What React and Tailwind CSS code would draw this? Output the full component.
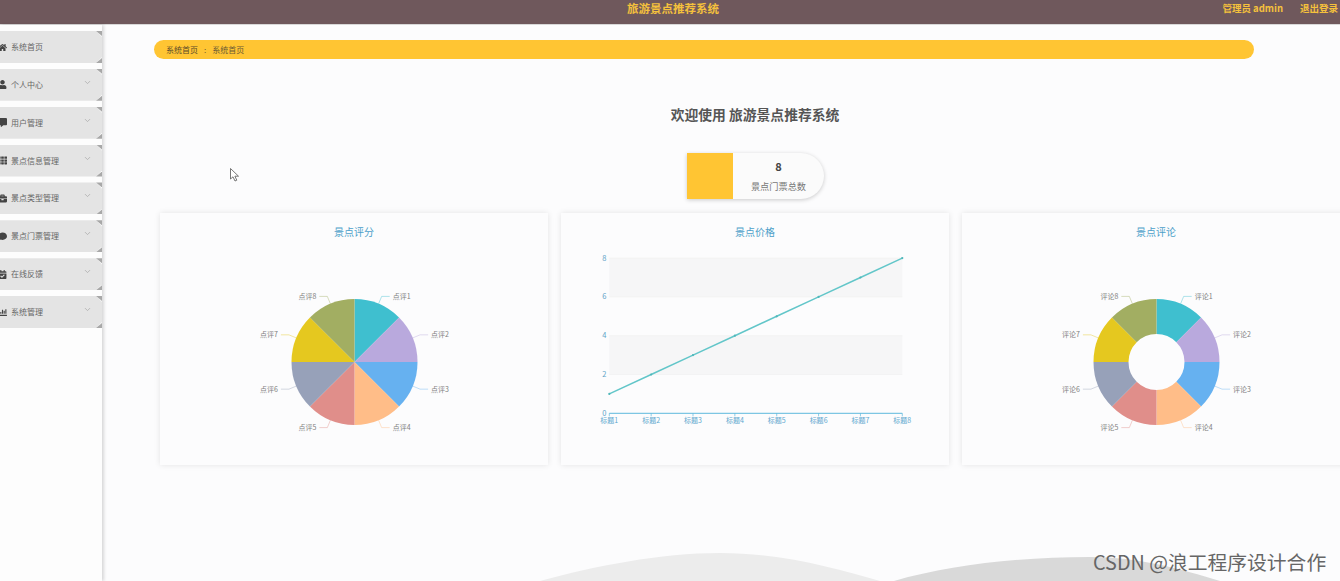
import { ChevronDown } from 'lucide-react'
import { FaHome, FaUser, FaComment, FaTh, FaBriefcase, FaCalendarCheck, FaChartBar, FaCommentAlt } from 'react-icons/fa'

const menu = [
  { name: '系统首页', icon: FaHome, plain: true },
  { name: '个人中心', icon: FaUser },
  { name: '用户管理', icon: FaCommentAlt },
  { name: '景点信息管理', icon: FaTh },
  { name: '景点类型管理', icon: FaBriefcase },
  { name: '景点门票管理', icon: FaComment },
  { name: '在线反馈', icon: FaCalendarCheck },
  { name: '系统管理', icon: FaChartBar },
]

const colors = ['#3fbfcf', '#b9a9dd', '#66b1f0', '#ffbd88', '#e08e8a', '#97a1b9', '#e5c81f', '#a2ae62']

function polar(cx, cy, r, deg) {
  const a = ((deg - 90) * Math.PI) / 180
  return [cx + r * Math.cos(a), cy + r * Math.sin(a)]
}

function Pie({ label, inner = 0 }) {
  const cx = 194.5
  const cy = 113
  const r = 63
  return (
    <svg width="388" height="216" className="block">
      {colors.map((c, i) => {
        const start = i * 45
        const end = start + 45
        const [x1, y1] = polar(cx, cy, r, start)
        const [x2, y2] = polar(cx, cy, r, end)
        const mid = start + 22.5
        const [lx1, ly1] = polar(cx, cy, r, mid)
        const [lx2, ly2] = polar(cx, cy, r + 8, mid)
        const right = mid < 180
        const lx3 = lx2 + (right ? 8 : -8)
        let d
        if (inner) {
          const [x3, y3] = polar(cx, cy, inner, end)
          const [x4, y4] = polar(cx, cy, inner, start)
          d = `M${x1} ${y1}A${r} ${r} 0 0 1 ${x2} ${y2}L${x3} ${y3}A${inner} ${inner} 0 0 0 ${x4} ${y4}Z`
        } else {
          d = `M${cx} ${cy}L${x1} ${y1}A${r} ${r} 0 0 1 ${x2} ${y2}Z`
        }
        return (
          <g key={i}>
            <path d={d} fill={c} />
            <polyline points={`${lx1},${ly1} ${lx2},${ly2} ${lx3},${ly2}`} fill="none" stroke={c} strokeWidth="0.6" opacity="0.7" />
            <text
              x={lx3 + (right ? 3 : -3)}
              y={ly2 + 2.5}
              fontSize="7"
              fill="#808080"
              textAnchor={right ? 'start' : 'end'}
            >
              {label}{i + 1}
            </text>
          </g>
        )
      })}
    </svg>
  )
}

function LineChart() {
  const left = 48.3
  const right = 341.3
  const y0 = 164.3
  const unit = 19.4
  const step = (right - left) / 7
  const yAt = (v) => y0 - v * unit
  const pts = [1, 2, 3, 4, 5, 6, 7, 8].map((v, i) => [left + i * step, yAt(v)])
  return (
    <svg width="388" height="216" className="block">
      <rect x={left} y={yAt(8)} width={right - left} height={unit * 2} fill="#f6f6f7" />
      <rect x={left} y={yAt(4)} width={right - left} height={unit * 2} fill="#f6f6f7" />
      {[2, 4, 6, 8].map((v) => (
        <line key={v} x1={left} x2={right} y1={yAt(v)} y2={yAt(v)} stroke="#f0f0f0" strokeWidth="0.7" />
      ))}
      {[0, 2, 4, 6, 8].map((v) => (
        <text key={v} x={left - 3} y={yAt(v) + 2.5} fontSize="7.5" fill="#5fa3c7" textAnchor="end">{v}</text>
      ))}
      <line x1={left} x2={right} y1={y0} y2={y0} stroke="#5db8dd" />
      {pts.map(([x], i) => (
        <g key={i}>
          <line x1={x} x2={x} y1={y0} y2={y0 + 3} stroke="#5db8dd" strokeWidth="0.7" />
          <text x={x} y={y0 + 10} fontSize="7" fill="#5fa8cf" textAnchor="middle">标题{i + 1}</text>
        </g>
      ))}
      <polyline points={pts.map((p) => p.join(',')).join(' ')} fill="none" stroke="#62c6c9" strokeWidth="1.5" />
      {pts.map(([x, y], i) => (
        <circle key={i} cx={x} cy={y} r="1.1" fill="#4fb6b9" />
      ))}
    </svg>
  )
}

function Card({ title, children }) {
  return (
    <div className="w-[388px] h-[252px] shrink-0 bg-[#fcfcfd] shadow-[0_0_6px_rgba(0,0,0,0.1)]">
      <div className="h-9 flex items-center justify-center text-[10px] text-[#4d9fc9]">{title}</div>
      {children}
    </div>
  )
}

function MenuItem({ item }) {
  const Icon = item.icon
  return (
    <div className="relative h-8 w-[102px]">
      <div className="h-full bg-[#e4e4e4] [clip-path:polygon(0_0,96px_0,102px_6px,102px_26px,96px_32px,0_32px)] flex items-center">
        <Icon className="w-[9px] h-[9px] text-[#444] -ml-[2px] shrink-0" />
        <span className="ml-[4px] text-[8px] text-[#666] whitespace-nowrap">{item.name}</span>
        {!item.plain && <ChevronDown className="absolute left-[83px] top-[9px] w-[9px] h-[9px] text-[#aaa]" />}
      </div>
      <div className="absolute top-0 right-0 w-[6px] h-[5px] bg-[#a8a8a8] [clip-path:polygon(0_0,100%_0,100%_100%)]" />
      <div className="absolute bottom-0 right-0 w-[6px] h-[5px] bg-[#a8a8a8] [clip-path:polygon(100%_0,100%_100%,0_100%)]" />
    </div>
  )
}

export default function App() {
  return (
    <div className="relative h-[581px] w-[1340px] overflow-hidden bg-[#fcfcfd] font-['Noto_Sans_CJK_SC','Noto_Sans',sans-serif]">
      <header className="h-[25px] bg-[#6f585c] border-b border-[#d8d8d8] relative flex items-start justify-end pr-[2px] gap-[17px] text-[9.5px] leading-[17px] font-bold text-[#f5c13c]">
        <div className="absolute left-[627px] top-[0px] text-[11.5px] leading-[17px] whitespace-nowrap">旅游景点推荐系统</div>
        <span>管理员 admin</span>
        <span>退出登录</span>
      </header>

      <div className="flex h-[556px]">
        <aside className="w-[102px] shrink-0 flex flex-col gap-[5.86px] pt-[6px] bg-[#fdfdfd] shadow-[2px_0_3px_rgba(0,0,0,0.15)] z-10">
          {menu.map((m) => (
            <MenuItem key={m.name} item={m} />
          ))}
        </aside>

        <main className="flex-1 min-w-0 relative">
          <div className="ml-[52px] mt-[15px] w-[1100px] h-[19px] rounded-full bg-[#ffc533] flex items-center pl-[12px] text-[8px] text-[#6a5a35]">
            <span className="text-[#5c4c2a]">系统首页</span>
            <span className="mx-[6px]">:</span>
            <span>系统首页</span>
          </div>

          <h1 className="ml-[52px] w-[1202px] mt-[45px] h-[20px] leading-[20px] text-center text-[13.8px] font-bold text-[#555]">欢迎使用 旅游景点推荐系统</h1>

          <div className="ml-[585px] mt-[29px] w-[137px] h-[46px] flex bg-[#fbfbfb] rounded-r-full shadow-[0_1px_4px_rgba(0,0,0,0.2)]">
            <div className="w-[46px] h-full bg-[#ffc533]" />
            <div className="flex-1 flex flex-col items-center pt-[5px]">
              <div className="text-[11px] font-bold text-[#444] leading-[16px]">8</div>
              <div className="text-[9.2px] text-[#777] leading-[14px] mt-[5px]">景点门票总数</div>
            </div>
          </div>

          <div className="flex gap-[13px] ml-[58px] mt-[14px]">
            <Card title="景点评分"><Pie label="点评" /></Card>
            <Card title="景点价格"><LineChart /></Card>
            <Card title="景点评论"><Pie label="评论" inner={28} /></Card>
          </div>
        </main>
      </div>

      {/* wave decoration at the bottom edge */}
      <svg className="absolute left-[500px] bottom-0" width="840" height="28" viewBox="0 0 840 28">
        <path d="M40 28C95 13 160 0 220 0C280 0 335 15 380 28Z" fill="#ececec" />
        <path d="M394 28C450 12 520 4 590 4C640 4 680 16 720 28Z" fill="#d9d9d9" />
      </svg>

      {/* mouse pointer */}
      <svg className="absolute left-[230px] top-[168px]" width="10" height="14" viewBox="0 0 10 14">
        <path d="M0.5 0.5V11L3 8.8L5 13L6.8 12.2L4.9 8.2H8.5Z" fill="#fff" stroke="#555" strokeWidth="0.8" />
      </svg>

      <div className="absolute left-[1093px] top-[549px] text-[19.8px] leading-[26px] text-[#666] whitespace-nowrap">CSDN @浪工程序设计合作</div>
    </div>
  )
}
